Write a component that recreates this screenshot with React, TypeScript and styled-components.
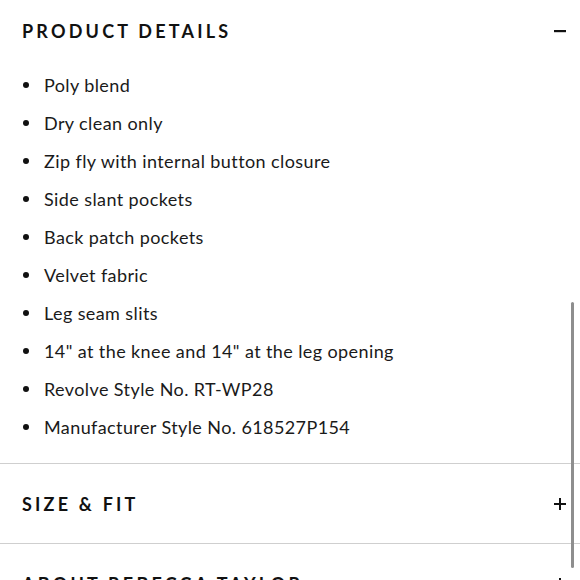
import React from 'react';
import styled, { createGlobalStyle } from 'styled-components';

const GlobalStyle = createGlobalStyle`
  html, body {
    margin: 0;
    padding: 0;
    background: #ffffff;
    overflow: hidden;
  }
  body {
    font-family: Lato, 'Open Sans', sans-serif;
    color: #111111;
  }
`;

const Page = styled.div`
  position: relative;
  width: 580px;
  height: 580px;
  overflow: hidden;
`;

const Section = styled.section`
  border-bottom: 1px solid #cfcfcf;
`;

const SectionHeader = styled.div<{ height: number }>`
  display: flex;
  align-items: center;
  justify-content: space-between;
  height: ${(props) => props.height}px;
  padding: 0 13px 0 22px;
`;

const Title = styled.h2`
  margin: 0;
  font-size: 18px;
  font-weight: 700;
  letter-spacing: 3.2px;
  color: #111111;
`;

const Toggle = styled.svg`
  display: block;
  width: 14px;
  height: 14px;
`;

const List = styled.ul`
  list-style: none;
  margin: 0;
  padding: 4px 0 17px 22px;
`;

const Item = styled.li`
  display: flex;
  align-items: center;
  height: 38px;
  font-size: 18px;
  letter-spacing: 0.4px;
  color: #1a1a1a;

  &::before {
    content: '';
    width: 6px;
    height: 6px;
    border-radius: 50%;
    background: #111111;
    margin: 0 15px 0 1px;
    flex-shrink: 0;
  }
`;

const Scrollbar = styled.div`
  position: absolute;
  right: 6px;
  top: 302px;
  width: 3px;
  height: 266px;
  border-radius: 2px;
  background: #8e8e8e;
`;

const details = [
  'Poly blend',
  'Dry clean only',
  'Zip fly with internal button closure',
  'Side slant pockets',
  'Back patch pockets',
  'Velvet fabric',
  'Leg seam slits',
  '14" at the knee and 14" at the leg opening',
  'Revolve Style No. RT-WP28',
  'Manufacturer Style No. 618527P154',
];

function Minus() {
  return (
    <Toggle viewBox="0 0 14 14">
      <rect x="1" y="6" width="12" height="2.2" fill="#111" />
    </Toggle>
  );
}

function Plus() {
  return (
    <Toggle viewBox="0 0 14 14">
      <rect x="1" y="6" width="12" height="2" fill="#111" />
      <rect x="6" y="1" width="2" height="12" fill="#111" />
    </Toggle>
  );
}

export default function App() {
  return (
    <Page>
      <GlobalStyle />
      <Section>
        <SectionHeader height={62}>
          <Title>PRODUCT DETAILS</Title>
          <Minus />
        </SectionHeader>
        <List>
          {details.map((d) => (
            <Item key={d}>{d}</Item>
          ))}
        </List>
      </Section>
      <Section>
        <SectionHeader height={79}>
          <Title>SIZE &amp; FIT</Title>
          <Plus />
        </SectionHeader>
      </Section>
      <Section>
        <SectionHeader height={79}>
          <Title>ABOUT REBECCA TAYLOR</Title>
          <Plus />
        </SectionHeader>
      </Section>
      <Scrollbar />
    </Page>
  );
}
